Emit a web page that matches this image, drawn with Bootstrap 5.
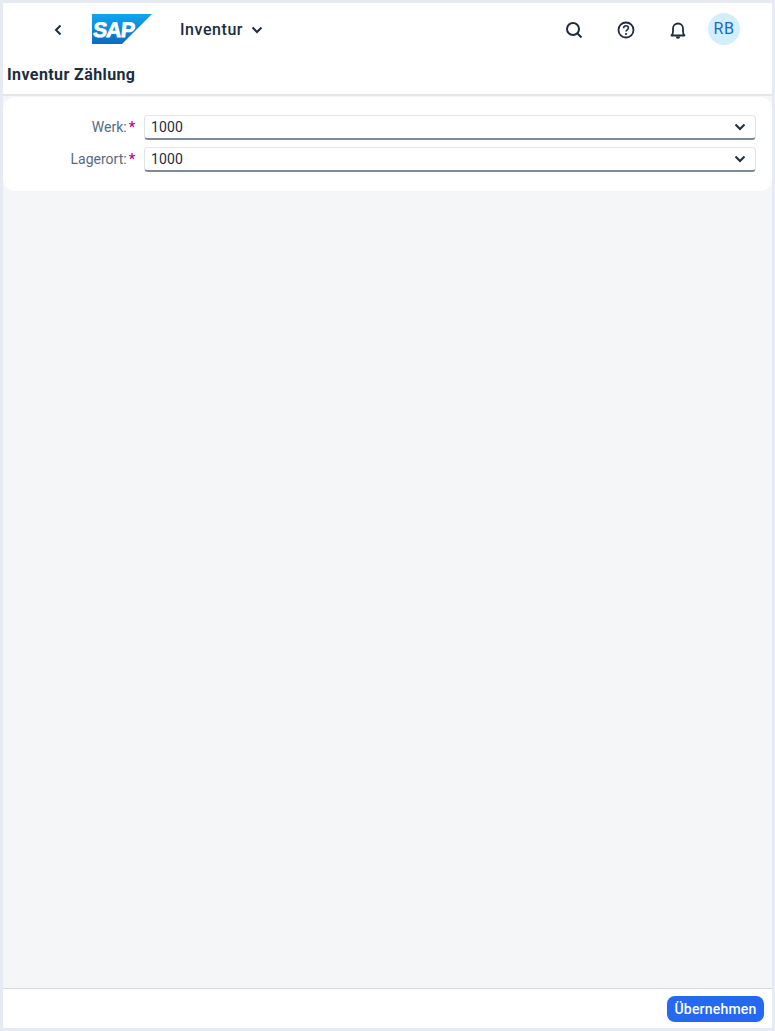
<!DOCTYPE html>
<html lang="de">
<head>
<meta charset="utf-8">
<title>Inventur Zählung</title>
<link href="https://cdn.jsdelivr.net/npm/bootstrap@5.3.0/dist/css/bootstrap.min.css" rel="stylesheet">
<style>
html,body{height:100%;margin:0}
body{background:#e6eaf2;font-family:Roboto,"Noto Sans",sans-serif;color:#1d2d3e;padding:3px;overflow:hidden}
.shell{height:1025px;width:769px;background:#f5f6f7}
.topbar{background:#fff;height:93px;border-bottom:2px solid #e4e6e9}
.bar1{height:54px;padding-left:45px;padding-right:32px}
.icbtn{width:20px;height:20px;padding:0;border:0;background:none;color:#1d2d3e}
.backic{margin-right:24px}
.logo{width:60px;height:30px;display:block;margin-bottom:2px}
.logo text{font:700 21px "Liberation Sans",sans-serif;fill:#fff;stroke:#fff;stroke-width:.8px;letter-spacing:-.8px}
.apptitle{font-size:16px;font-weight:500;margin-left:28px;color:#1d2d3e;letter-spacing:.55px}
.rightic{gap:32px}
.avatar{width:32px;height:32px;border-radius:50%;background:#d1efff;color:#1b66d6;font-size:16px;margin-left:-12px;margin-bottom:2px;letter-spacing:.6px}
.pagetitle{font-size:16px;font-weight:700;padding-left:4px;line-height:20px;margin-top:8px;color:#1d2d3e;letter-spacing:.4px}
.formcard{background:#fff;border-radius:12px;margin-top:1px;height:94px;padding:18px 16px 0 0}
.frow{display:grid;grid-template-columns:132px 1fr;column-gap:9px;align-items:center;margin-bottom:7px}
.flabel{text-align:right;font-size:14px;color:#556b82;line-height:25px}
.flabel b{color:#c0068a;font-weight:700;margin-left:2px}
.fselect{height:25px;border:1px solid #dfe3e8;border-bottom:2px solid #7b8a9a;border-radius:4px;background:#fff;font-size:14px;padding:0 9px 0 6px;color:#1d2d3e}
.fselect span{letter-spacing:.1px}
.spacer{flex:1}
.footbar{height:40px;background:#fff;border-top:1px solid #d9d9d9;padding-right:8px}
.savebtn{--bs-btn-padding-y:0;--bs-btn-padding-x:0;background:#2469f0;border:0;color:#fff;font-size:14px;font-weight:500;height:26px;border-radius:8px;line-height:26px;width:97px;letter-spacing:.2px}
</style>
</head>
<body>
<div class="shell d-flex flex-column">
  <header class="topbar">
    <div class="bar1 d-flex align-items-center">
      <button class="icbtn d-flex align-items-center justify-content-center backic" aria-label="Zurück">
        <svg width="10" height="12" viewBox="0 0 10 12"><path d="M7.5 1.5 3 6l4.5 4.5" fill="none" stroke="#1d2d3e" stroke-width="2"/></svg>
      </button>
      <svg class="logo" viewBox="0 0 60 30">
        <defs><linearGradient id="sg" x1="0" y1="0" x2="0" y2="1"><stop offset="0" stop-color="#12a5ee"/><stop offset="1" stop-color="#0a6bc4"/></linearGradient></defs>
        <polygon points="0,0 60,0 30,30 0,30" fill="url(#sg)"/>
        <text x="3" y="23" transform="skewX(-6)">SAP</text>
      </svg>
      <span class="apptitle">Inventur</span>
      <svg class="ms-2" width="12" height="10" viewBox="0 0 12 10"><path d="M1.5 2.5 6 7l4.5-4.5" fill="none" stroke="#1d2d3e" stroke-width="2"/></svg>
      <div class="ms-auto d-flex align-items-center rightic">
        <svg width="20" height="20" viewBox="0 0 20 20" aria-label="Suche"><circle cx="9" cy="9" r="6" fill="none" stroke="#1d2d3e" stroke-width="2"/><path d="M13.2 13.2 17.5 17.5" stroke="#1d2d3e" stroke-width="2"/></svg>
        <svg width="20" height="20" viewBox="0 0 20 20" aria-label="Hilfe"><circle cx="10" cy="10" r="7.5" fill="none" stroke="#1d2d3e" stroke-width="1.8"/><path d="M7.6 8.2c0-1.6 1.1-2.4 2.4-2.4s2.4.8 2.4 2.2c0 1.8-2.4 1.8-2.4 3.6" fill="none" stroke="#1d2d3e" stroke-width="1.6"/><circle cx="10" cy="14" r="1.1" fill="#1d2d3e"/></svg>
        <svg width="20" height="20" viewBox="0 0 20 20" aria-label="Benachrichtigungen"><path d="M3.5 15.5c1.2-1 1.5-2 1.5-4V8.5a5 5 0 0 1 10 0v3c0 2 .3 3 1.5 4z" fill="none" stroke="#1d2d3e" stroke-width="1.8" stroke-linejoin="round"/><path d="M7.8 16.5a2.2 2.2 0 0 0 4.4 0z" fill="#1d2d3e"/></svg>
        <div class="avatar d-flex align-items-center justify-content-center">RB</div>
      </div>
    </div>
    <div class="pagetitle">Inventur Zählung</div>
  </header>
  <main class="formcard">
    <div class="frow">
      <div class="flabel">Werk:<b>*</b></div>
      <div class="fselect d-flex align-items-center justify-content-between"><span>1000</span>
        <svg width="12" height="10" viewBox="0 0 12 10"><path d="M1.5 2.5 6 7l4.5-4.5" fill="none" stroke="#1d2d3e" stroke-width="2"/></svg></div>
    </div>
    <div class="frow">
      <div class="flabel">Lagerort:<b>*</b></div>
      <div class="fselect d-flex align-items-center justify-content-between"><span>1000</span>
        <svg width="12" height="10" viewBox="0 0 12 10"><path d="M1.5 2.5 6 7l4.5-4.5" fill="none" stroke="#1d2d3e" stroke-width="2"/></svg></div>
    </div>
  </main>
  <div class="spacer"></div>
  <footer class="footbar d-flex align-items-center justify-content-end">
    <button class="btn savebtn">Übernehmen</button>
  </footer>
</div>
</body>
</html>
